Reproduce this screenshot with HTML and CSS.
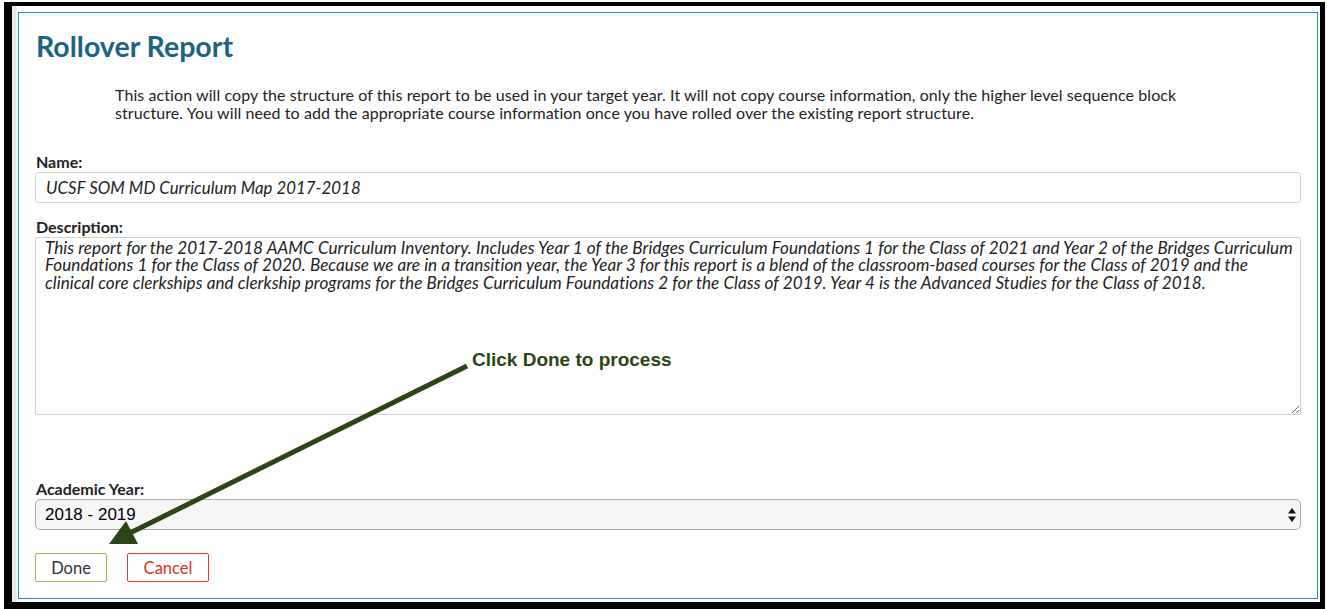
FILE: index.html
```html
<!DOCTYPE html>
<html>
<head>
<meta charset="utf-8">
<link rel="stylesheet" href="styles.css">
</head>
<body>
<div class="frame">
  <div class="panel">
    <h1 class="title">Rollover Report</h1>
    <p class="intro">This action will copy the structure of this report to be used in your target year. It will not copy course information, only the higher level sequence block structure. You will need to add the appropriate course information once you have rolled over the existing report structure.</p>
    <label class="label">Name:</label>
    <input class="field" type="text" value="UCSF SOM MD Curriculum Map 2017-2018">
    <label class="label label-desc">Description:</label>
    <textarea class="area">This report for the 2017-2018 AAMC Curriculum Inventory. Includes Year 1 of the Bridges Curriculum Foundations 1 for the Class of 2021 and Year 2 of the Bridges Curriculum Foundations 1 for the Class of 2020. Because we are in a transition year, the Year 3 for this report is a blend of the classroom-based courses for the Class of 2019 and the clinical core clerkships and clerkship programs for the Bridges Curriculum Foundations 2 for the Class of 2019. Year 4 is the Advanced Studies for the Class of 2018.</textarea>
    <label class="label label-year">Academic Year:</label>
    <div class="select-wrap">
      <select class="select"><option>2018 - 2019</option></select>
      <svg class="select-arrows" width="8" height="14" viewBox="0 0 8 14"><path d="M4 0 L8 5.5 L0 5.5 Z M0 8.5 L8 8.5 L4 14 Z" fill="#111"/></svg>
    </div>
    <div class="buttons">
      <button class="btn btn-done">Done</button>
      <button class="btn btn-cancel">Cancel</button>
    </div>
  </div>
</div>
<div class="callout">Click Done to process</div>
<svg class="pointer" width="1327" height="609" viewBox="0 0 1327 609">
  <line x1="467" y1="366" x2="130" y2="533" stroke="#2b4516" stroke-width="5"/>
  <polygon points="109,544 126,521 138,544" fill="#2b4516"/>
</svg>
</body>
</html>
```

FILE: styles.css
```css
html, body {
  margin: 0;
  padding: 0;
  background: #fff;
}
body {
  position: relative;
  width: 1327px;
  height: 609px;
  overflow: hidden;
  font-family: Lato, "Open Sans", sans-serif;
  color: #333;
}
.frame {
  box-sizing: border-box;
  margin: 2px 2px 0 4px;
  width: 1321px;
  height: 607px;
  border-style: solid;
  border-color: #000;
  border-width: 4px 5px 7px 8px;
  padding: 6px 2px 3px 6px;
  background: linear-gradient(to right, #f2f2f2 0, #e2e2e2 3px, #fff 6px);
  display: flex;
}
.panel {
  flex: 1;
  box-sizing: border-box;
  border: 1px solid #1b93c2;
  background: #fff;
  padding: 17px 16px 16px 16px;
  display: flex;
  flex-direction: column;
}
.title {
  margin: 0;
  font-size: 28.5px;
  line-height: 32px;
  font-weight: 700;
  color: #1c6383;
  padding-left: 1px;
}
.intro {
  margin: 24px 80px 0 80px;
  font-size: 16px;
  letter-spacing: 0.08px;
  line-height: 18px;
  color: #222;
}
.label {
  display: block;
  margin-top: 32px;
  font-size: 16px;
  line-height: 16px;
  font-weight: 700;
  color: #222;
  padding-left: 1px;
}
.label-desc { margin-top: 16px; }
.label-year { margin-top: 66px; }
.field {
  box-sizing: border-box;
  margin-top: 2px;
  width: 100%;
  height: 31px;
  border: 1px solid #d4d4d4;
  border-radius: 3px;
  padding: 0 10px;
  font-family: Lato, "Open Sans", sans-serif;
  font-style: italic;
  font-size: 16.8px;
  letter-spacing: 0.05px;
  color: #222;
  outline: none;
}
.area {
  box-sizing: border-box;
  margin-top: 2px;
  width: 100%;
  height: 180px;
  border: 1px solid #cfcfcf;
  border-radius: 2px;
  padding: 1px 0 3px 9px;
  font-family: Lato, "Open Sans", sans-serif;
  font-style: italic;
  font-size: 17.1px;
  letter-spacing: 0.05px;
  line-height: 17.5px;
  color: #222;
  resize: both;
  outline: none;
}
.select-wrap {
  position: relative;
  margin-top: 2px;
}
.select {
  appearance: none;
  -webkit-appearance: none;
  box-sizing: border-box;
  width: 100%;
  height: 31px;
  border: 1px solid #aaa;
  border-radius: 5px;
  background: #f6f6f6;
  padding: 0 9px;
  font-family: "Liberation Sans", Arial, sans-serif;
  font-size: 17px;
  color: #000;
  outline: none;
}
.select-arrows {
  position: absolute;
  right: 5px;
  top: 9px;
}
.buttons {
  display: flex;
  gap: 20px;
  margin-top: 23px;
}
.btn {
  box-sizing: border-box;
  height: 29px;
  background: #fff;
  border-radius: 2px;
  font-family: Lato, "Open Sans", sans-serif;
  font-size: 16.5px;
  padding: 0;
}
.btn-done {
  width: 72px;
  border: 1px solid #8cc152;
  color: #333;
}
.btn-cancel {
  width: 82px;
  border: 1px solid #dd3b1e;
  color: #d8351c;
}
.callout {
  position: absolute;
  left: 472px;
  top: 349px;
  font-family: "Liberation Sans", Arial, sans-serif;
  font-weight: 700;
  font-size: 19px;
  line-height: 22px;
  color: #2b4516;
}
.pointer {
  position: absolute;
  left: 0;
  top: 0;
  pointer-events: none;
}
```
